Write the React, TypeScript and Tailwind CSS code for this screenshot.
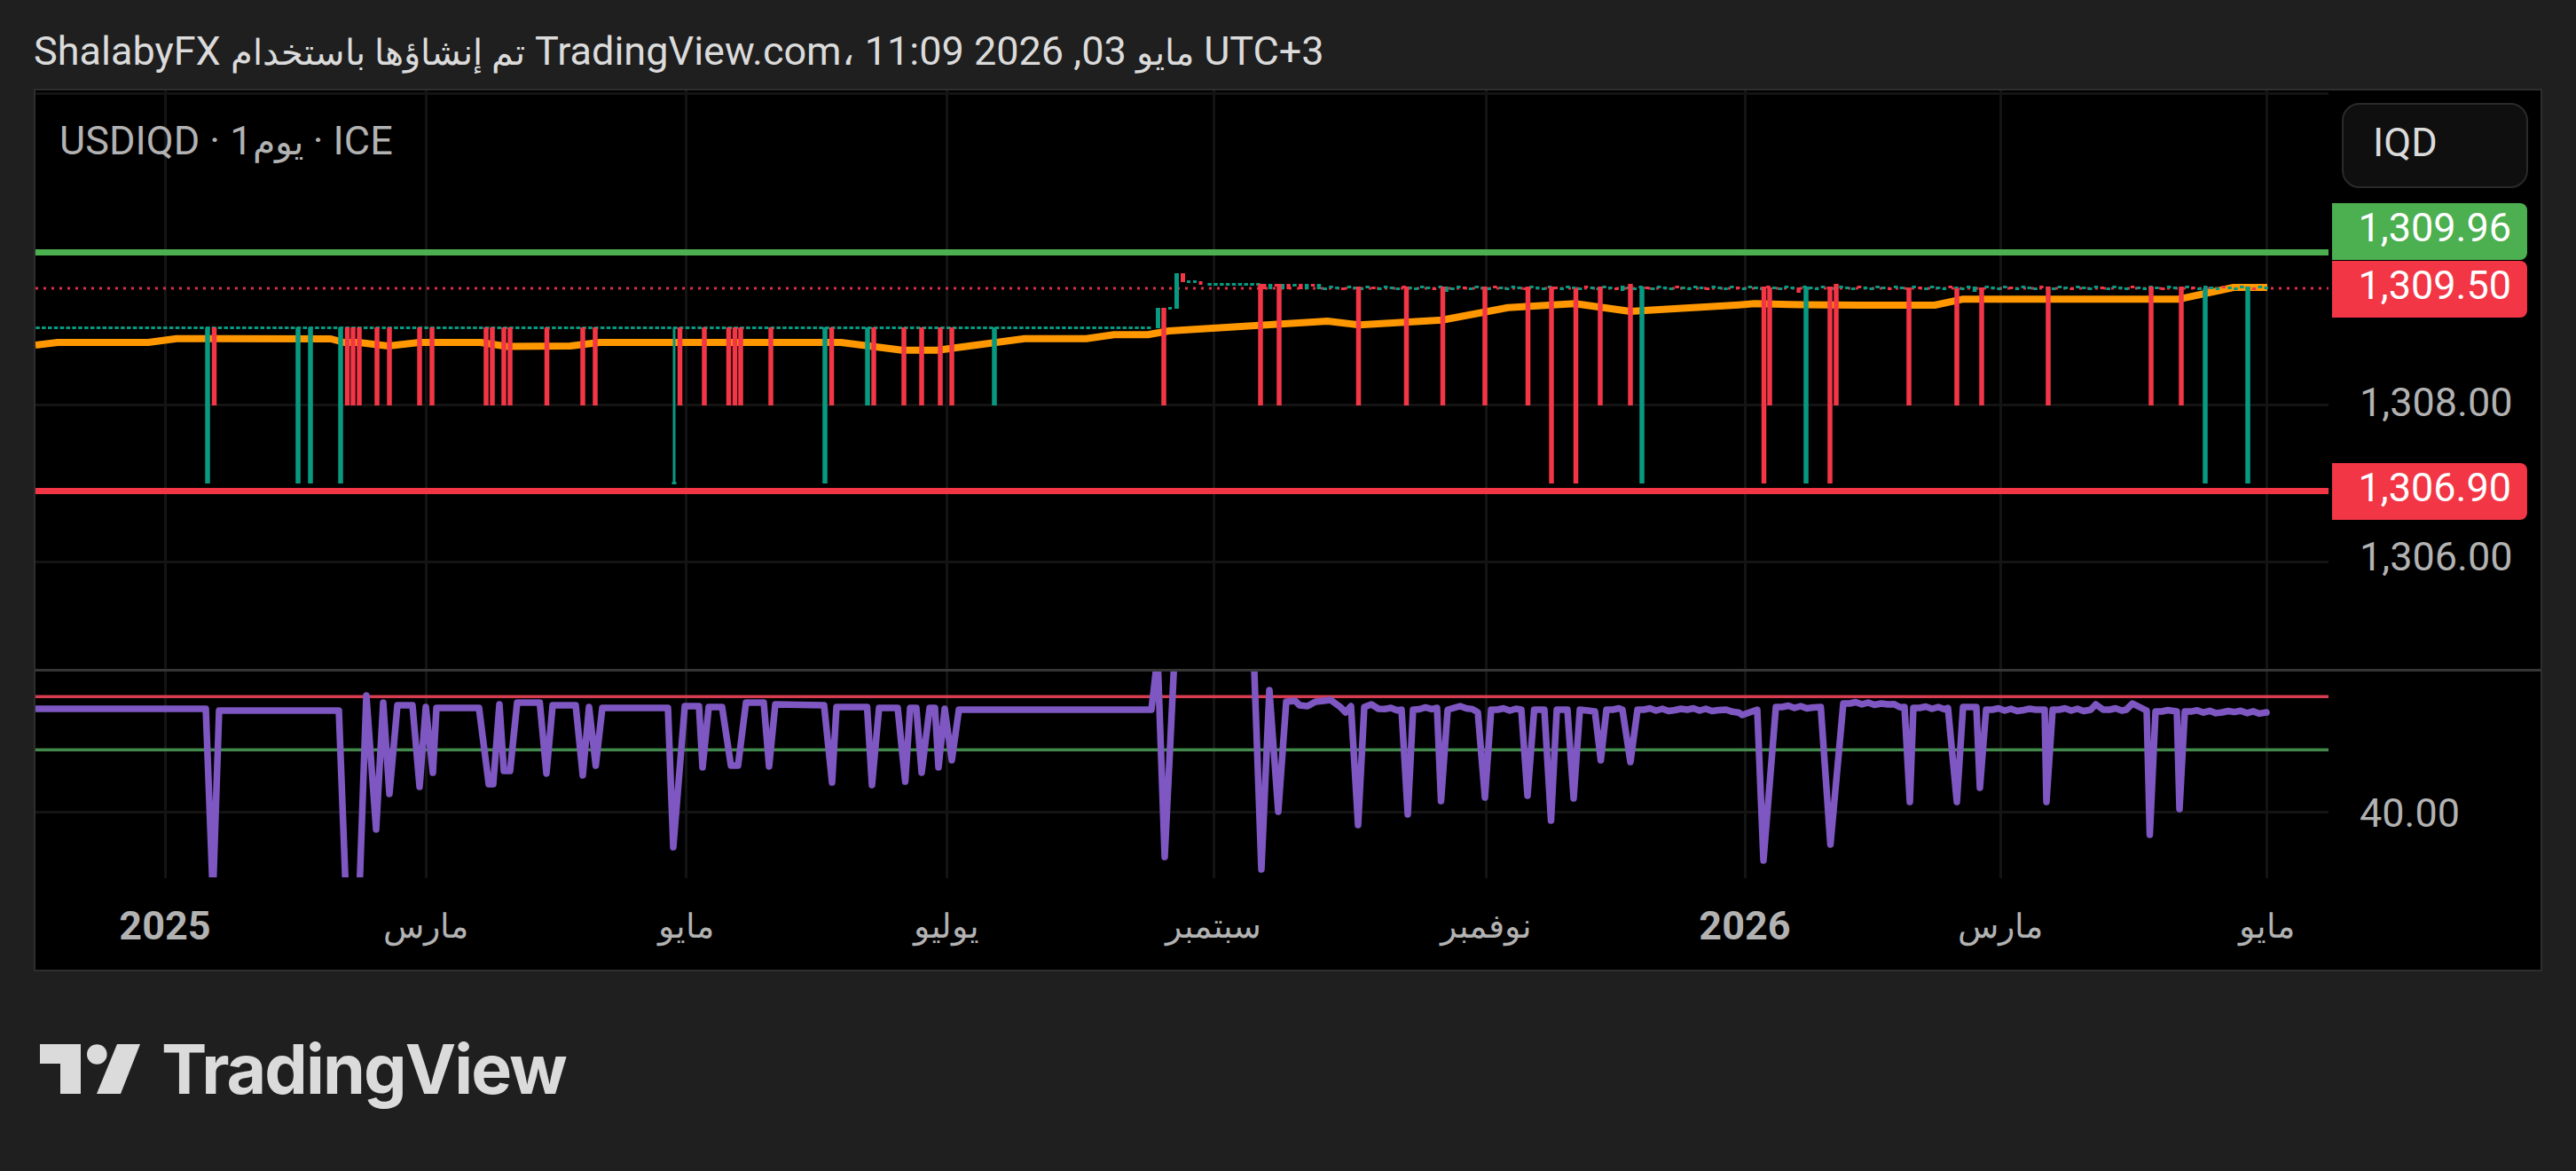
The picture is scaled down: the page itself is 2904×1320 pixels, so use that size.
const gridX = [186, 480, 773, 1067, 1368, 1675, 1967, 2255, 2555];
const gridY = [105, 456, 633, 915];

const RED = "#f23645";
const TEAL = "#089981";

// x, colour, long or short wick, top override
const bars: [number, string, "l" | "s", number?][] = [
  [234, TEAL, "l"], [241.5, RED, "s"], [336, TEAL, "l"], [350, TEAL, "l"], [384, TEAL, "l"],
  [391.5, RED, "s"], [398, RED, "s"], [405, RED, "s"], [425, RED, "s"], [439, RED, "s"],
  [473, RED, "s"], [487, RED, "s"], [548, RED, "s"], [555, RED, "s"], [568, RED, "s"],
  [575, RED, "s"], [616.5, RED, "s"], [657, RED, "s"], [671, RED, "s"], [766.5, RED, "s"],
  [794, RED, "s"], [821.5, RED, "s"], [828.5, RED, "s"], [835, RED, "s"], [869, RED, "s"],
  [930, TEAL, "l"], [937.5, RED, "s"], [978, TEAL, "s"], [985, RED, "s"], [1019, RED, "s"],
  [1039, RED, "s"], [1060, RED, "s"], [1073, RED, "s"], [1121, TEAL, "s"], [1312, RED, "s", 347],
  [1421, RED, "s", 320], [1442, RED, "s", 320], [1531.5, RED, "s"], [1585.5, RED, "s"],
  [1626.5, RED, "s"], [1674, RED, "s"], [1722.5, RED, "s"], [1749, RED, "l"], [1776.5, RED, "l", 325],
  [1804, RED, "s"], [1838, RED, "s", 320], [1851, TEAL, "l"], [1988.5, RED, "l"], [1995, RED, "s", 324],
  [2036, TEAL, "l"], [2063, RED, "l"], [2070, RED, "s", 320], [2152, RED, "s", 324], [2206, RED, "s", 325],
  [2234, RED, "s", 324], [2309, RED, "s"], [2425, RED, "s"], [2459, RED, "s"], [2486, TEAL, "l", 325],
  [2534, TEAL, "l"],
];

const step = 6.845;
const dashes: { x: number; y: number; h: number; c: string }[] = [];
for (let i = 0; ; i++) {
  const x = 42.3 + i * step;
  if (x > 2556) break;
  if (x < 1300) {
    dashes.push({ x, y: 368, h: 3, c: TEAL });
  } else if (x > 1358 && x < 1422) {
    dashes.push({ x, y: 319, h: 3, c: TEAL });
  } else if (x >= 1422 && x < 1490) {
    dashes.push({ x, y: 320, h: i % 3 === 0 ? 3 : 6, c: i % 2 === 0 ? RED : TEAL });
  } else if (x >= 1490) {
    const red = (i * i * 13 + i * 5) % 5 < 2;
    dashes.push({ x, y: 322 + (i * 7) % 3, h: i % 29 === 0 ? 6 : 3, c: red ? RED : TEAL });
  }
}

const special: [number, number, number, number, string][] = [
  [1303, 347, 5, 23, TEAL], [1317, 346, 4, 3, TEAL], [1324, 308, 5, 40, TEAL], [1331, 308, 5, 10, RED],
  [1338, 316, 4, 3, TEAL], [1345, 316, 4, 3, TEAL], [1351.5, 317, 4, 4, RED],
];

const orange: [number, number][] = [
  [40, 389], [65, 386], [167, 386], [199, 381.7], [373, 382], [388, 386], [404, 386], [437.5, 390],
  [473, 386], [542, 386], [571, 390.5], [643, 390], [676, 386], [948, 386], [1017, 394.7], [1057, 394.7],
  [1155, 381.7], [1224.5, 381.7], [1256, 377.3], [1294, 377.3], [1318, 373], [1496.6, 362], [1532, 366.3],
  [1626, 360.7], [1700, 346.7], [1775.6, 342.3], [1838, 351], [1858, 349.7], [1960, 343.7], [1978, 342.3],
  [2018, 343.3], [2098, 344], [2181, 344], [2212, 337.3], [2455.5, 337.3], [2518, 324], [2556, 324],
];

const rsiRaw: [number, number][] = [
  [40, 799], [232, 799], [240, 1010], [247, 801], [382, 801], [390, 1010], [405, 1010], [413, 784], [424, 935],
  [432, 792], [439, 895], [448, 795], [465, 795], [473, 887], [480, 797], [488, 871], [492, 798], [540, 798],
  [551, 884], [556, 884], [563, 794], [568, 869], [575, 869], [583, 792], [608.5, 792], [616, 872], [623, 795],
  [649, 795], [657, 874], [664, 797], [671.6, 863], [679, 798], [753, 798], [759, 955], [772, 796], [788, 796],
  [792, 865], [799, 797], [814, 797], [824, 863], [832, 863], [841, 792], [861, 792], [867, 864], [874, 794],
  [929, 795], [938, 882], [943, 797], [977.5, 797], [983, 885], [991, 798], [1012, 798], [1020.5, 881], [1026, 798],
  [1033, 798], [1039, 871], [1048, 798], [1054, 798], [1058, 865], [1065, 799], [1073, 857], [1081, 800], [1298, 800],
  [1305, 740], [1313, 966], [1326, 700], [1412, 700], [1422, 980], [1431, 778], [1441, 915], [1450, 791], [1460, 790],
  [1465, 795], [1474, 796], [1483, 791], [1500, 789], [1511, 797], [1517, 803], [1523, 796], [1531, 930], [1538, 797],
  [1546, 794], [1554, 799], [1580, 800], [1587, 918], [1593, 800], [1620, 798], [1624.5, 903], [1632, 800], [1646, 796],
  [1666, 803], [1674, 899], [1681, 800], [1715, 800], [1722, 897], [1729.5, 800], [1741, 800], [1748.5, 925], [1755, 800],
  [1767, 800], [1774, 900], [1781, 800], [1798, 802], [1804.6, 857], [1811, 800], [1829, 800], [1838, 859], [1846, 800],
  [1946, 800], [1964, 806], [1981, 800], [1988, 970], [2002, 797], [2052.6, 797], [2063.5, 952], [2078, 793], [2121, 793],
  [2147, 797], [2153, 904], [2157, 798], [2196, 798], [2206, 904], [2213, 797], [2228, 797], [2232, 888], [2239, 800],
  [2305, 800], [2307, 904], [2314, 800], [2357, 800], [2362.6, 794], [2371, 800], [2397, 800], [2404, 793], [2420, 801],
  [2423.5, 941], [2430, 802], [2454, 802], [2457, 912], [2463, 802], [2555, 803],
];

// the later stretch of the line is not flat, add the small wobble
const wobble = [0, -1.5, 1, -1, 1.5, 0.5, -1];
const rsi: [number, number][] = [];
rsiRaw.forEach((p, i) => {
  rsi.push(p);
  const next = rsiRaw[i + 1];
  if (next && p[0] > 1440 && next[0] - p[0] > 14 && Math.abs(next[1] - p[1]) < 8) {
    for (let x = p[0] + 7, n = 0; x < next[0] - 3; x += 7, n++) {
      const y = p[1] + ((next[1] - p[1]) * (x - p[0])) / (next[0] - p[0]);
      rsi.push([x, y + wobble[n % wobble.length]]);
    }
  }
});

const toPoints = (pts: [number, number][]) => pts.map((p) => p.join(",")).join(" ");

function Chart() {
  return (
    <svg viewBox="40 102 2585 888" className="block h-[888px] w-[2585px] shrink-0">
      <defs>
        <clipPath id="pricePane">
          <rect x="40" y="102" width="2585" height="652" />
        </clipPath>
        <clipPath id="rsiPane">
          <rect x="40" y="757" width="2585" height="232" />
        </clipPath>
      </defs>

      {gridX.map((x) => (
        <rect key={x} x={x - 1} y="102" width="3" height="888" fill="#141414" />
      ))}
      {gridY.map((y) => (
        <rect key={y} x="40" y={y - 1} width="2585" height="3" fill="#141414" />
      ))}

      <rect x="40" y="754" width="2585" height="3" fill="#363636" />

      <rect x="40" y="281" width="2585" height="7" fill="#4caf50" />
      <rect x="40" y="550" width="2585" height="7" fill={RED} />
      <line x1="40" y1="325" x2="2625" y2="325" stroke={RED} strokeWidth="3" strokeDasharray="3 6" opacity="0.9" />

      <g clipPath="url(#pricePane)">
        <polyline points={toPoints(orange)} fill="none" stroke="#ff9800" strokeWidth="8" strokeLinejoin="round" />
        {dashes.map((d) => (
          <rect key={d.x} x={d.x - 2} y={d.y} width="4.5" height={d.h} fill={d.c} />
        ))}
        {special.map(([x, y, w, h, c]) => (
          <rect key={x} x={x} y={y} width={w} height={h} fill={c} />
        ))}
        {bars.map(([x, c, kind, top]) => {
          const y = top ?? (x < 1305 ? 369 : 323);
          return <rect key={x} x={x - 2.75} y={y} width="5.5" height={(kind === "l" ? 545 : 457) - y} fill={c} />;
        })}
        <rect x="758.5" y="369" width="3" height="176" fill={TEAL} />
        <rect x="757.5" y="543" width="5" height="3" fill={TEAL} />
      </g>

      <rect x="40" y="783.5" width="2585" height="3.5" fill="#d63d50" />
      <rect x="40" y="843.5" width="2585" height="3.5" fill="#43894c" />
      <polyline
        points={toPoints(rsi)}
        clipPath="url(#rsiPane)"
        fill="none"
        stroke="#7e57c2"
        strokeWidth="7.5"
        strokeLinejoin="round"
        strokeLinecap="round"
      />
    </svg>
  );
}

const months = [
  { text: "2025", cls: "font-bold" },
  { text: "مارس", cls: "text-[38px]" },
  { text: "مايو", cls: "text-[38px]" },
  { text: "يوليو", cls: "text-[38px]" },
  { text: "سبتمبر", cls: "text-[38px]" },
  { text: "نوفمبر", cls: "text-[38px]" },
  { text: "2026", cls: "font-bold" },
  { text: "مارس", cls: "text-[38px]" },
  { text: "مايو", cls: "text-[38px]" },
];

function PriceTag({ value, color }: { value: string; color: string }) {
  return (
    <div className={`ml-1 flex h-16 w-[220px] items-center justify-end rounded-r-lg pr-[18px] pb-[9px] text-white ${color}`}>
      {value}
    </div>
  );
}

function PriceAxis() {
  return (
    <div className="flex h-[888px] flex-1 flex-col">
      <div className="mt-[14px] ml-[15px] flex h-24 w-[210px] items-center rounded-[20px] border-2 border-[#2a2a2a] bg-[#0f0f0f] pb-[6px] pl-[33px] text-[#dbdbdb]">
        IQD
      </div>
      <div className="mt-[17px]">
        <PriceTag value="1,309.96" color="bg-[#4caf50]" />
      </div>
      <div className="mt-px">
        <PriceTag value="1,309.50" color="bg-[#f23645]" />
      </div>
      <div className="mt-[74px] pl-[35px]">1,308.00</div>
      <div className="mt-[46px]">
        <PriceTag value="1,306.90" color="bg-[#f23645]" />
      </div>
      <div className="mt-5 pl-[35px]">1,306.00</div>
      <div className="mt-[104px] h-[3px] bg-[#363636]" />
      <div className="mt-[138px] pl-[35px]">40.00</div>
    </div>
  );
}

function Logo() {
  return (
    <svg viewBox="45 1177 113 56" className="h-14 w-[113px]" fill="#dbdbdb">
      <path d="M45 1177H91V1233H68V1199H45Z" />
      <circle cx="109.3" cy="1188.5" r="11.3" />
      <path d="M132 1177H158L136 1233H109Z" />
    </svg>
  );
}

export default function App() {
  return (
    <div className="flex h-[1320px] w-[2904px] flex-col overflow-hidden bg-[#1f1f1f] pl-[38px] font-[Roboto,sans-serif]">
      <div className="h-[100px] pt-9 text-[45px] leading-[44px] whitespace-nowrap text-[#dbdbdb]">
        ShalabyFX <span className="text-[40px]">تم إنشاؤها باستخدام</span> <span>TradingView.com،</span> <span className="text-[40px]">مايو</span> <span>03, 2026 11:09</span> <span>UTC+3</span>
      </div>

      <div className="flex h-[995px] w-[2828px] flex-col border-2 border-[#2e2e2e] bg-black text-[45px] leading-[44px] text-[#b2b2b2]">
        <div className="relative flex">
          <Chart />
          <PriceAxis />
          <div className="absolute top-[35px] left-[27px] whitespace-nowrap">USDIQD · 1<span className="text-[41px]">يوم</span> · ICE</div>
        </div>

        <div className="grid grid-cols-[292px_296px_290px_298px_304px_310px_274px_302px_298px] pt-8 text-center">
          {months.map((m, i) => (
            <span key={i} className={`whitespace-nowrap ${m.cls}`}>
              {m.text}
            </span>
          ))}
        </div>
      </div>

      <div className="mt-[82px] ml-[7px] flex items-start gap-[24px]">
        <Logo />
        <span className="font-[Inter,sans-serif] text-[77px] leading-[56px] font-bold tracking-[-1.9px] text-[#dbdbdb]">
          TradingView
        </span>
      </div>
    </div>
  );
}
